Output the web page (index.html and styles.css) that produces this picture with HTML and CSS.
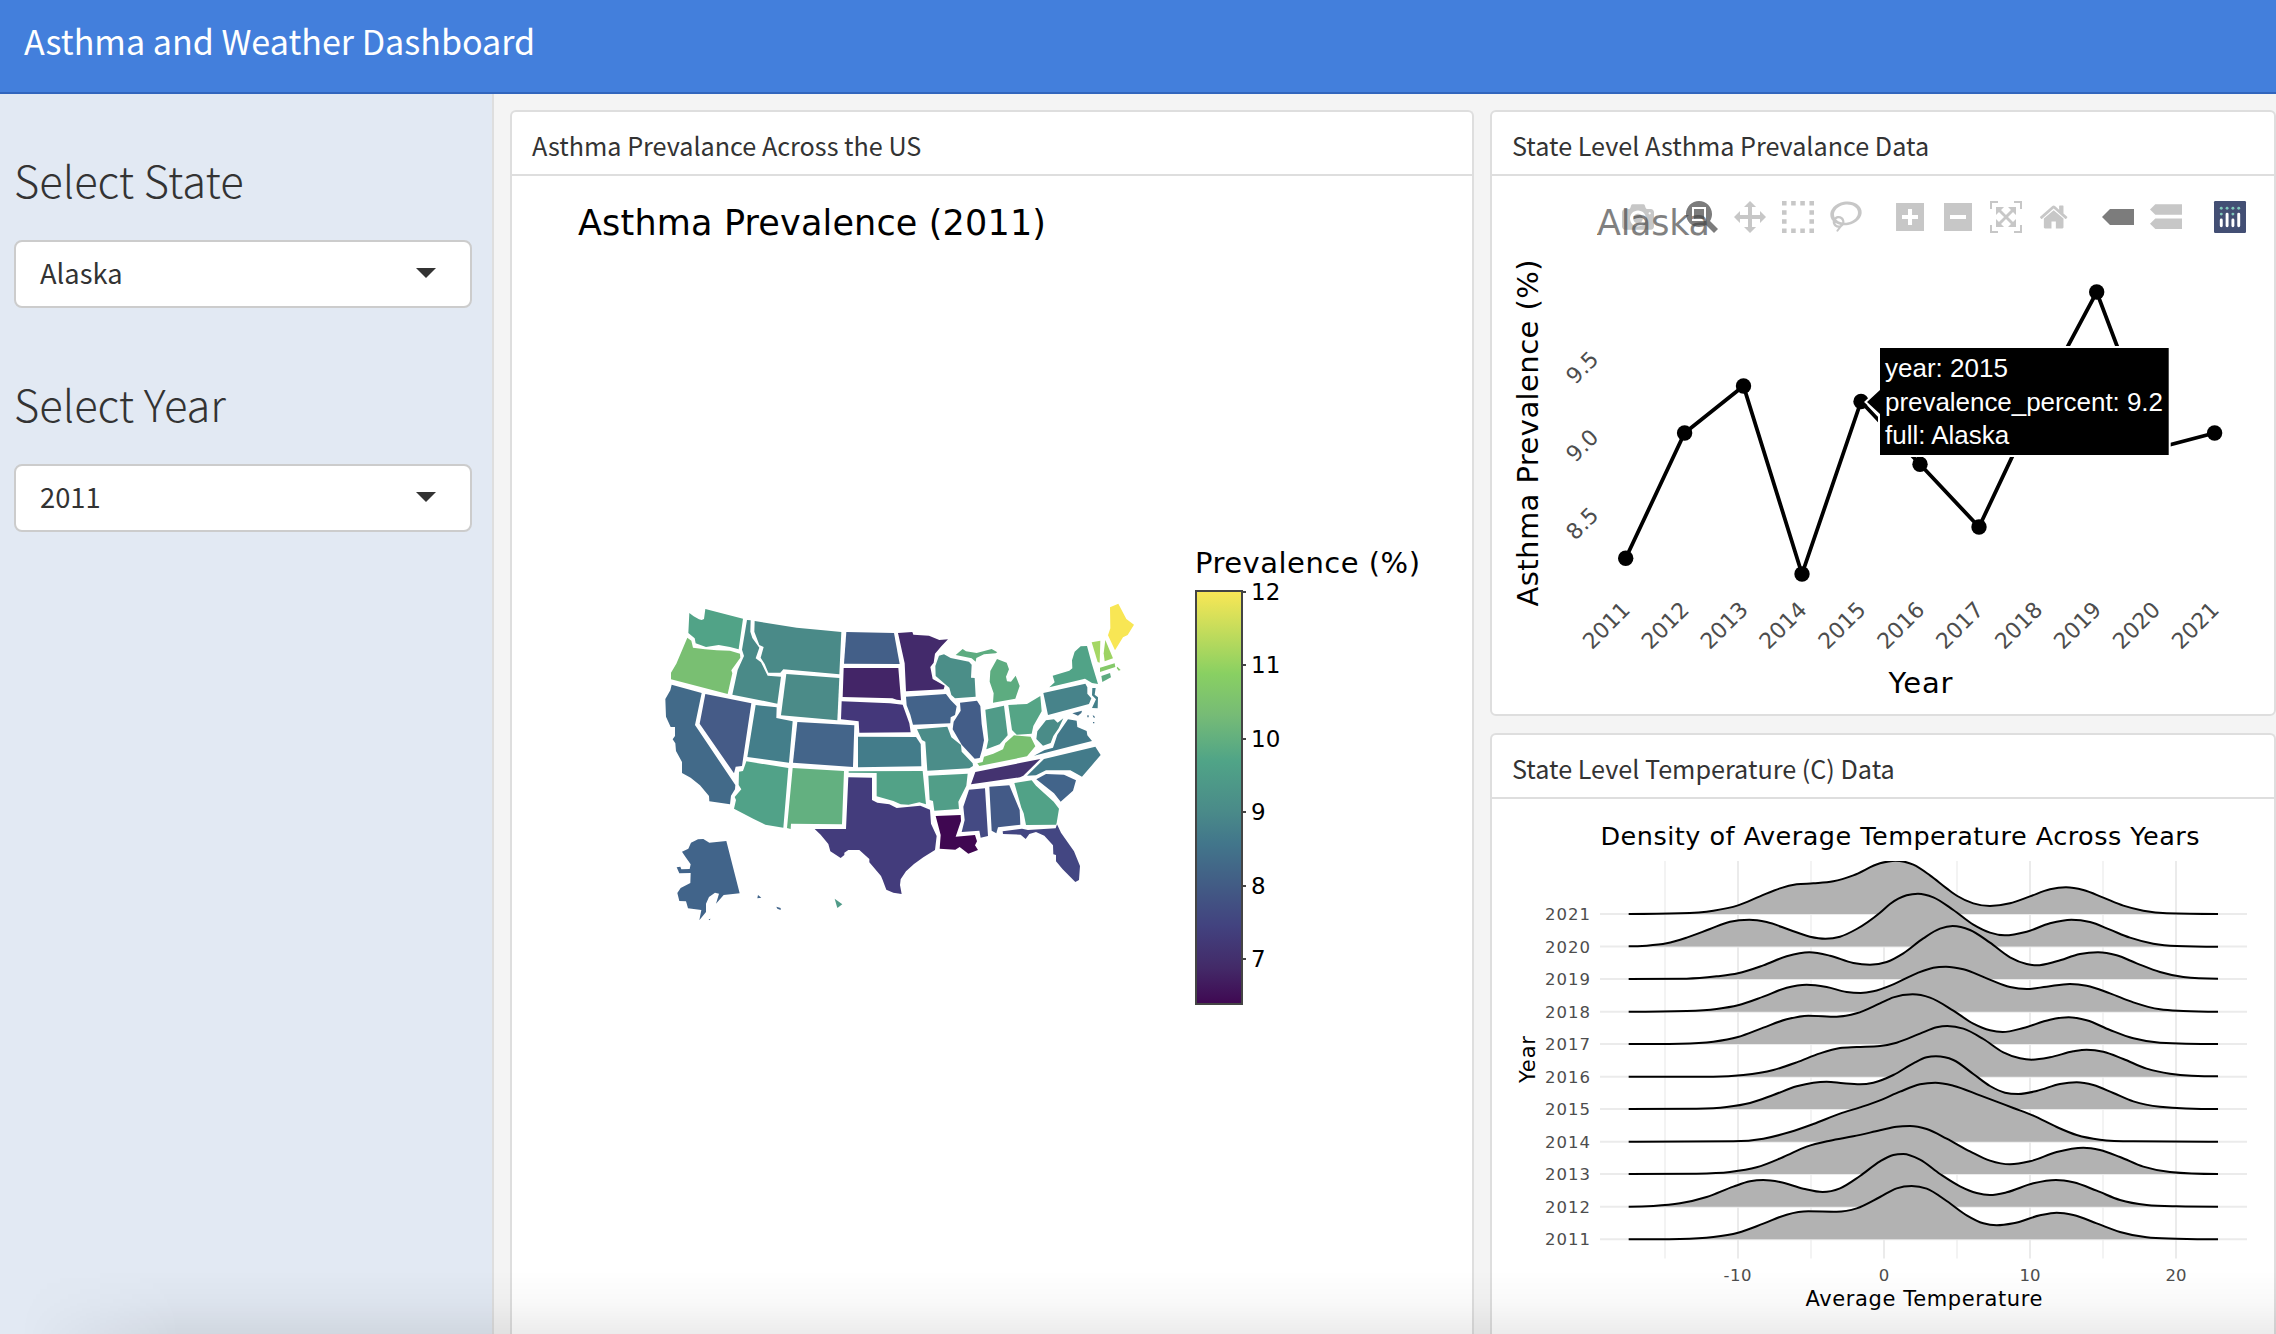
FILE: index.html
```html
<!DOCTYPE html>
<html lang="en">
<head>
<meta charset="utf-8">
<title>Asthma and Weather Dashboard</title>
<link rel="stylesheet" href="styles.css">
</head>
<body>
<header class="navbar"><span class="brand">Asthma and Weather Dashboard</span></header>
<div class="layout">
  <aside class="sidebar">
    <h3 class="side-title">Select State</h3>
    <div class="select"><span>Alaska</span><i class="caret"></i></div>
    <h3 class="side-title">Select Year</h3>
    <div class="select"><span>2011</span><i class="caret"></i></div>
  </aside>
  <main class="board">
    <section class="card">
      <h2 class="card-title">Asthma Prevalance Across the US</h2>
      <svg class="chart" width="960" height="1158" viewBox="512 176 960 1158">
        <defs>
          <linearGradient id="viridis" x1="0" y1="0" x2="0" y2="1">
            <stop offset="0" stop-color="#fae755"/><stop offset=".2" stop-color="#89d062"/>
            <stop offset=".3" stop-color="#76bb76"/><stop offset=".41" stop-color="#50a487"/>
            <stop offset=".53" stop-color="#4a8b89"/><stop offset=".61" stop-color="#42768b"/>
            <stop offset=".81" stop-color="#42427f"/><stop offset=".91" stop-color="#432a68"/>
            <stop offset="1" stop-color="#3f0751"/>
          </linearGradient>
        </defs>
        <text class="verdana" x="578" y="235" font-size="35" textLength="468">Asthma Prevalence (2011)</text>
        <!-- western states, Alaska and Hawaii -->
        <g transform="translate(650 590) scale(.33333)">
          <path fill="#51a387" d="M118 69L131 79L147 88L155 90L162 87L166 57L279 86L266 178L240 171L206 165L168 171L137 160L134 145L115 129Z"/>
          <path fill="#79bf72" d="M112 143L124 152L129 173L165 178L200 181L240 182L270 191L271 203L244 241L247 250L233 312L63 268L63 248L79 221Z"/>
          <path fill="#426a89" d="M65 284L155 309L135 405L256 585L255 598L243 617L240 643L178 634L177 618L150 586L122 563L96 549V516L78 483L76 460L68 448L75 438V411L62 411L48 380L46 327L61 301Z"/>
          <path fill="#455b87" d="M166 312L304 340L276 528L257 530L252 550L149 401Z"/>
          <path fill="#4a8a88" d="M291 90L302 91L301 125L307 144L328 173L317 205L333 217L353 257L393 260L382 341L247 314L263 240L282 198L276 179Z"/>
          <path fill="#4a8a88" d="M314 93L440 113L520 121L574 126L568 253L400 238L391 248L355 248L344 222L332 203L341 171L328 165L313 125Z"/>
          <path fill="#4b8b88" d="M409 252L568 264L562 391L393 376Z"/>
          <path fill="#447e8a" d="M317 345L380 352L379 384L428 394L417 518L292 501Z"/>
          <path fill="#44658a" d="M442 396L613 406L609 531L429 518Z"/>
          <path fill="#51a288" d="M289 514L415 534L400 713L346 704L311 687L252 656L258 630L254 621L274 598L266 585L267 545L279 543Z"/>
          <path fill="#63b080" d="M428 534L582 543L576 703L423 701L422 717L411 714Z"/>
          <path fill="#41648a" d="M144 748L160 747L178 758L229 753L269 910L221 915L198 941L207 911L195 908L177 921L168 941V966L148 991L154 960L114 955L108 934L88 933L82 909L92 894L121 879L122 849L88 850L80 832L91 830L94 838L119 837L122 823L105 799L96 785L115 776L123 758Z"/>
          <path fill="#41648a" d="M324 915L334 923L322 925ZM379 950L392 954V960L382 956ZM176 988L182 986L178 991Z"/>
          <path fill="#509b88" d="M554 926L577 943L562 954Z"/>
        </g>
        <!-- central and eastern states -->
        <g transform="translate(880 590) scale(.33333)">
          <path fill="#435f88" d="M-101 126L42 129L59 222L-108 221Z"/>
          <path fill="#432567" d="M-109 234L55 234L63 331L50 329L37 325L-112 321Z"/>
          <path fill="#44377a" d="M-115 334L30 340L68 344L88 400L92 427L-62 428L-64 394L-117 388Z"/>
          <path fill="#437c8a" d="M-66 440L108 441L122 462L124 529L-66 532Z"/>
          <path fill="#52a287" d="M-94 544L128 543L138 643L118 637L86 644L62 643L40 633L-10 619L-10 549L-94 548Z"/>
          <path fill="#433c7c" d="M-95 562L-24 563V630L-8 638L28 643L50 654L121 647L150 659L153 701L170 738L165 780L130 802L102 822L78 844L62 868L60 885L65 912L40 908L19 899L8 870L3 858L-32 817L-32 807L-62 780L-95 780L-107 788L-107 795L-118 804L-149 784L-155 762L-178 734L-196 717L-102 717Z"/>
          <path fill="#432a6b" d="M54 129L97 126L100 134L147 137L178 150L204 148L184 169L165 191L161 218L151 231L158 267L194 287L191 298L78 304L74 220Z"/>
          <path fill="#43638a" d="M78 320L198 312L211 329L230 349L225 375L212 382L211 400L99 404L91 374L80 346Z"/>
          <path fill="#4b8d89" d="M111 418L202 410L214 442L243 465L245 485L278 520L279 528L268 535L142 542L136 455L126 450Z"/>
          <path fill="#519e88" d="M145 557L263 551L259 587L235 635L237 657L163 662L159 633L149 630Z"/>
          <path fill="#3f0751" d="M167 678L242 675L243 693L227 740L285 735L291 754L285 766L294 780L265 791L239 771L226 779L179 776L182 735Z"/>
          <path fill="#4b8e88" d="M177 197L192 193L212 204L267 215L275 224L273 263L284 264L287 320L225 325L214 315L208 293L167 258L166 228Z"/>
          <path fill="#5dac80" d="M227 195L248 177L258 184L290 189L335 177L352 187L347 190L312 193L289 204L287 215L275 205ZM351 207L380 218L387 238L378 260L381 274L393 275L407 257L419 288L406 326L339 338L341 310L329 275L331 243Z"/>
          <path fill="#435d88" d="M240 338L291 332L301 348L305 402L312 451L306 480L299 504L284 506L245 464L218 418L221 395L242 362Z"/>
          <path fill="#509b88" d="M316 359L372 347L383 436L359 463L319 478L325 450Z"/>
          <path fill="#55a586" d="M385 345L441 342L481 318L485 364L460 408L455 431L410 434L396 420Z"/>
          <path fill="#78bf70" d="M292 520L308 516L312 500L340 491L369 478L376 459L402 436L452 440L466 469L441 499L298 528Z"/>
          <path fill="#443370" d="M286 546L481 507L430 557L420 562L273 583Z"/>
          <path fill="#444a83" d="M267 599L315 595L324 738L302 743L298 722L245 726L254 690L250 650Z"/>
          <path fill="#435a87" d="M328 590L388 586L419 660L421 704L354 712L349 730L335 722Z"/>
          <path fill="#51a287" d="M403 579L455 571L468 587L521 635L537 656L530 699L528 704L438 705L431 670L424 653Z"/>
          <path fill="#434682" d="M368 724L426 716L444 720L527 715L531 703L543 728L582 784L600 828L597 870L586 876L548 838L528 814V795L520 793L519 766L493 737L468 726L448 732L437 747L422 734L369 732Z"/>
          <path fill="#42648a" d="M469 568L498 552L552 554L588 571L579 602L542 635L522 610Z"/>
          <path fill="#437b8a" d="M441 557L492 507L646 470L662 495L637 524L606 560L571 541L498 541L468 556Z"/>
          <path fill="#427889" d="M462 497L494 480L519 473L532 434L564 388L590 392L592 411L620 423L622 436L636 453L588 465Z"/>
          <path fill="#4a8c88" d="M498 391L522 388L533 398L550 385L536 415L520 438L512 459L489 467L469 447L472 424Z"/>
          <path fill="#47838a" d="M490 309L616 281L622 292L622 311L634 325L627 342L504 375Z"/>
          <path fill="#437088" d="M577 370L606 362L604 369L594 377ZM622 376l4 0l0 6l-4 0ZM638 376l5 2l2 6l-5 -2ZM639 396l4 0l0 4l-4 0Z"/>
          <path fill="#44808a" d="M637 294L647 294L644 314L654 322L653 355L636 354L648 328L636 316Z"/>
          <path fill="#51a387" d="M508 292L524 277L518 257L568 242L577 235L576 211L584 185L602 169L621 168L635 220L654 282L636 279L615 266Z"/>
          <path fill="#a5d764" d="M635 157L661 152L659 218L653 216Z"/>
          <path fill="#9dd363" d="M676 150L699 205L674 214L671 190Z"/>
          <path fill="#84c96a" d="M660 233L704 220L706 231L660 246ZM712 230L722 240L716 242L710 234Z"/>
          <path fill="#5cab80" d="M664 258L690 249L693 262L667 276Z"/>
          <path fill="#f8e654" d="M690 52L715 41L739 87L762 104L743 135L729 142L705 181L684 136L691 115Z"/>
        </g>
        <text class="verdana" x="1195" y="573" font-size="29" textLength="225">Prevalence (%)</text>
        <rect x="1196" y="591" width="46" height="414" fill="url(#viridis)"/>
        <rect x="1196" y="591" width="46" height="413" fill="none" stroke="#444" stroke-width="2"/>
        <path d="M1242 592h4M1242 665h4M1242 739h4M1242 812h4M1242 886h4M1242 959h4" stroke="#444" stroke-width="2"/>
        <g class="verdana" font-size="23">
          <text x="1251" y="600">12</text><text x="1251" y="673">11</text><text x="1251" y="747">10</text>
          <text x="1251" y="820">9</text><text x="1251" y="894">8</text><text x="1251" y="967">7</text>
        </g>
      </svg>
    </section>
    <div class="column">
      <section class="card card-top">
        <h2 class="card-title">State Level Asthma Prevalance Data</h2>
        <svg class="chart" width="782" height="538" viewBox="1492 176 782 538">
          <text class="verdana" x="1597" y="234.5" font-size="35" textLength="113">Alaska</text>
          <polyline fill="none" stroke="#000" stroke-width="3.8" points="1625.7,558.3 1684.6,433 1743.5,386 1802,574 1861,401.5 1920,464.3 1979,527 2038,402 2096.7,292 2155.7,448.5 2214.6,433"/>
          <g><circle cx="1625.7" cy="558.3" r="7.7"/><circle cx="1684.6" cy="433" r="7.7"/><circle cx="1743.5" cy="386" r="7.7"/><circle cx="1802" cy="574" r="7.7"/><circle cx="1861" cy="401.5" r="7.7"/><circle cx="1920" cy="464.3" r="7.7"/><circle cx="1979" cy="527" r="7.7"/><circle cx="2096.7" cy="292" r="7.7"/><circle cx="2214.6" cy="433" r="7.7"/></g>
          <g class="tick" font-size="22" text-anchor="end">
            <text transform="translate(1600 360.500) rotate(-45)">9.5</text>
            <text transform="translate(1600 438.500) rotate(-45)">9.0</text>
            <text transform="translate(1600 516.500) rotate(-45)">8.5</text>
            <text transform="translate(1631.5 611) rotate(-45)">2011</text>
            <text transform="translate(1690.4 611) rotate(-45)">2012</text>
            <text transform="translate(1749.3 611) rotate(-45)">2013</text>
            <text transform="translate(1808.2 611) rotate(-45)">2014</text>
            <text transform="translate(1867.1 611) rotate(-45)">2015</text>
            <text transform="translate(1926 611) rotate(-45)">2016</text>
            <text transform="translate(1984.9 611) rotate(-45)">2017</text>
            <text transform="translate(2043.8 611) rotate(-45)">2018</text>
            <text transform="translate(2102.7 611) rotate(-45)">2019</text>
            <text transform="translate(2161.6 611) rotate(-45)">2020</text>
            <text transform="translate(2220.5 611) rotate(-45)">2021</text>
          </g>
          <text class="verdana" transform="translate(1537.5 606.5) rotate(-90)" font-size="29" textLength="347">Asthma Prevalence (%)</text>
          <text class="verdana" x="1888.5" y="692.5" font-size="29" textLength="64">Year</text>
          <!-- hover label -->
          <path d="M1867 402L1880 390V348H2168.7V455H1880V414Z" fill="#000" stroke="#fff" stroke-width="4" paint-order="stroke"/>
          <g class="hover" font-size="26">
            <text x="1885" y="377">year: 2015</text>
            <text x="1885" y="411" textLength="278">prevalence_percent: 9.2</text>
            <text x="1885" y="444">full: Alaska</text>
          </g>
          <!-- modebar -->
          <rect x="1598" y="193" width="658" height="48" fill="#fff" fill-opacity=".5"/>
          <g fill="#444" fill-opacity=".3">
            <path transform="translate(1622 201) scale(.032) matrix(1 0 0 -1 0 850)" d="m500 450c-83 0-150-67-150-150 0-83 67-150 150-150 83 0 150 67 150 150 0 83-67 150-150 150z m400 150h-120c-16 0-34 13-39 29l-31 93c-6 15-23 28-40 28h-340c-16 0-34-13-39-28l-31-94c-6-15-23-28-40-28h-120c-55 0-100-45-100-100v-450c0-55 45-100 100-100h800c55 0 100 45 100 100v450c0 55-45 100-100 100z m-400-550c-138 0-250 112-250 250 0 138 112 250 250 250 138 0 250-112 250-250 0-138-112-250-250-250z m365 380c-19 0-35 16-35 35 0 19 16 35 35 35 19 0 35-16 35-35 0-19-16-35-35-35z"/>
            <path fill-opacity=".7" transform="translate(1686 201) scale(.032) matrix(1 0 0 -1 0 850)" d="m1000-25l-250 251c40 63 63 138 63 218 0 224-182 406-407 406-224 0-406-182-406-406s183-406 407-406c80 0 155 22 218 62l250-250 125 125z m-812 250l0 438 437 0 0-438-437 0z m62 375l313 0 0-312-313 0 0 312z"/>
            <path transform="translate(1734 201) scale(.032) matrix(1 0 0 -1 0 850)" d="m1000 350l-187 188 0-125-250 0 0 250 125 0-188 187-187-187 125 0 0-250-250 0 0 125-188-188 186-187 0 125 252 0 0-250-125 0 187-188 188 188-125 0 0 250 250 0 0-126 187 188z"/>
            <path transform="translate(1782 201) scale(4.571)" d="M0 0h1v1H0zM2 0h1v1H2zM4 0h1v1H4zM6 0h1v1H6zM0 2h1v1H0zM6 2h1v1H6zM0 4h1v1H0zM6 4h1v1H6zM0 6h1v1H0zM2 6h1v1H2zM4 6h1v1H4zM6 6h1v1H6z"/>
            <path transform="translate(1830 201) scale(.031) matrix(1 0 0 -1 0 850)" d="m1018 538c-36 207-290 336-568 286-277-48-473-256-436-463 10-57 36-108 76-151-13-66 11-137 68-183 34-28 75-41 114-42l-55-70 0 0c-2-1-3-2-4-3-10-14-8-34 5-45 14-11 34-8 45 4 1 1 2 3 2 5l0 0 113 140c16 11 31 24 45 40 4 3 6 7 8 11 48-3 100 0 151 9 278 48 473 255 436 462z m-624-379c-80 14-149 48-197 96 42 42 109 47 156 9 33-26 47-66 41-105z m-187-74c-19 16-33 37-39 60 50-32 109-55 174-68-42-25-95-24-135 8z m360 75c-34-7-69-9-102-8 8 62-16 128-68 170-73 59-175 54-244-5-9 20-16 40-20 61-28 159 121 317 333 354s407-60 434-217c28-159-121-318-333-355z"/>
            <path transform="translate(1896 201) scale(.032) matrix(1 0 0 -1 0 850)" d="m1 787l0-875 875 0 0 875-875 0z m687-500l-187 0 0-187-125 0 0 187-188 0 0 125 188 0 0 187 125 0 0-187 187 0 0-125z"/>
            <path transform="translate(1944 201) scale(.032) matrix(1 0 0 -1 0 850)" d="m0 788l0-876 876 0 0 876-876 0z m688-500l-500 0 0 125 500 0 0-125z"/>
            <path transform="translate(1990 201) scale(.032) matrix(1 0 0 -1 0 850)" d="m250 850l-187 0-63 0 0-62 0-188 63 0 0 188 187 0 0 62z m688 0l-188 0 0-62 188 0 0-188 62 0 0 188 0 62-62 0z m-875-938l0 188-63 0 0-188 0-62 63 0 187 0 0 62-187 0z m875 188l0-188-188 0 0-62 188 0 62 0 0 62 0 188-62 0z m-125 188l-1 0-93-94-156 156 156 156 92-93 2 0 0 250-250 0 0-2 93-92-156-156-156 156 94 92 0 2-250 0 0-250 0 0 93 93 157-156-157-156-93 94 0 0 0-250 250 0 0 0-94 93 156 157 156-157-93-93 0 0 250 0 0 250z"/>
            <path transform="translate(2039.500 201) scale(.0305 .032) matrix(1 0 0 -1 0 850)" d="m786 296v-267q0-15-11-26t-25-10h-214v214h-143v-214h-214q-15 0-25 10t-11 26v267q0 1 0 2t0 2l321 264 321-264q1-1 1-4z m124 39l-34-41q-5-5-12-6h-2q-7 0-12 3l-386 322-386-322q-7-4-13-4-7 2-12 7l-35 41q-4 5-3 13t6 12l401 334q18 15 42 15t43-15l136-114v109q0 8 5 13t13 5h107q8 0 13-5t5-13v-227l122-102q5-5 6-12t-4-13z"/>
            <path fill-opacity=".7" transform="translate(2102 209) scale(.02133)" d="M375 0L0 375L375 750H1500V0Z"/>
            <path transform="translate(2150 201) scale(.02844) matrix(1 0 0 -1 0 900)" d="m187 786l0 2-187-188 188-187 0 0 937 0 0 373-938 0z m0-499l0 1-187-188 188-188 0 0 937 0 0 376-938-1z"/>
          </g>
          <g transform="translate(2214 201) scale(.24242)">
            <rect width="132" height="132" rx="5" fill="#434f74"/>
            <g fill="#80c9bb"><circle cx="30" cy="30" r="6"/><circle cx="54" cy="30" r="6"/><circle cx="78" cy="30" r="6"/><circle cx="102" cy="30" r="6"/><circle cx="30" cy="54" r="6"/><circle cx="78" cy="54" r="6"/></g>
            <path d="M30 78V102M54 54V102M78 78V102M102 54V102" stroke="#fff" stroke-width="12" stroke-linecap="round"/>
          </g>
        </svg>
      </section>
      <section class="card card-bottom">
        <h2 class="card-title">State Level Temperature (C) Data</h2>
        <svg class="chart" width="782" height="535" viewBox="1492 799 782 535">
          <text class="plot" x="1600.500" y="845" font-size="25.500" textLength="599">Density of Average Temperature Across Years</text>
          <path d="M1665 861V1258.500M1811 861V1258.500M1957 861V1258.500M2103 861V1258.500" stroke="#f0f0f0" stroke-width="1.500"/>
          <path d="M1738 861V1258.500M1884 861V1258.500M2030 861V1258.500M2176 861V1258.500" stroke="#ebebeb" stroke-width="2"/>
          <clipPath id="panel"><rect x="1600" y="861" width="647" height="398"/></clipPath>
          <g clip-path="url(#panel)"><g id="ridges"></g></g>
          <g class="tick" id="ridge-labels" font-size="16.500"></g>
          <g class="tick" font-size="16.500" text-anchor="middle">
            <text x="1737.500" y="1281" textLength="28">-10</text><text x="1884" y="1281">0</text><text x="2030" y="1281" textLength="21">10</text><text x="2176" y="1281" textLength="21">20</text>
          </g>
          <text class="plot" x="1805.500" y="1306" font-size="21" textLength="237">Average Temperature</text>
          <text class="plot" transform="translate(1535 1083) rotate(-90)" font-size="21" textLength="47">Year</text>
        </svg>
      </section>
    </div>
  </main>
</div>
<div class="fade"></div>
<script src="ridges.js"></script>
</body>
</html>
```
FILE: styles.css
```css
* { box-sizing: border-box; }
html, body { margin: 0; height: 1334px; overflow: hidden; }
body {
  display: flex;
  flex-direction: column;
  background: #f4f4f4;
  color: #333;
  font-family: "Noto Sans CJK SC", "Noto Sans", sans-serif;
}
.navbar {
  flex: none;
  height: 94px;
  padding: 0 0 12px 24px;
  display: flex;
  align-items: center;
  background: #437fdc;
  border-bottom: 2px solid #3165bd;
}
.brand { color: #fff; font-size: 34.1px; line-height: 1; white-space: nowrap; }
.layout { flex: 1; min-height: 0; display: flex; }
.sidebar {
  flex: none;
  width: 494px;
  padding: 56px 20px 0 14px;
  background: #e2e9f3;
  border-right: 2px solid #dedede;
}
.side-title {
  margin: 0;
  height: 90px;
  font-family: "Noto Sans CJK SC Light", "Noto Sans CJK SC", sans-serif;
  font-size: 43.5px;
  line-height: 60px;
  font-weight: 300;
}
.select {
  height: 68px;
  margin-bottom: 66px;
  padding: 0 34px 2px 24px;
  display: flex;
  align-items: center;
  justify-content: space-between;
  background: #fff;
  border: 2px solid #ccc;
  border-radius: 8px;
  font-size: 27.3px;
  line-height: 1;
}
.caret {
  border: 10px solid transparent;
  border-top-color: #333;
  border-bottom: 0;
  margin-bottom: 1px;
}
.board { flex: 1; display: flex; gap: 16px; padding: 16px 0 0 16px; min-width: 0; }
.card {
  width: 964px;
  flex: none;
  background: #fff;
  border: 2px solid #dedede;
  border-bottom: 0;
  border-radius: 6px 6px 0 0;
}
.column { width: 786px; flex: none; display: flex; flex-direction: column; gap: 17px; }
.column .card { width: 786px; }
.card-top { height: 606px; border-bottom: 2px solid #dedede; border-radius: 6px; overflow: hidden; }
.card-bottom { height: 602px; }
.card-title {
  margin: 0;
  height: 64px;
  padding: 5px 0 0 20px;
  border-bottom: 2px solid #dedede;
  font-size: 25.2px;
  line-height: 56px;
  font-weight: 400;
  white-space: nowrap;
}
.chart { display: block; }
.verdana, .tick, .plot { font-family: "DejaVu Sans", Verdana, sans-serif; }
.tick { fill: #4d4d4d; }
.hover { font-family: "Liberation Sans", Arial, sans-serif; fill: #fff; }
.fade {
  position: absolute;
  left: 0;
  right: 0;
  bottom: 0;
  height: 64px;
  background: linear-gradient(rgba(0, 0, 0, 0), rgba(0, 0, 0, .025) 50%, rgba(0, 0, 0, .075));
  -webkit-mask-image: linear-gradient(to right, transparent 20px, #000 180px);
  mask-image: linear-gradient(to right, transparent 20px, #000 180px);
}
```
FILE: ridges.js
```js
// Density outlines per year, top ridge first; three units per pixel.
const ridges = {
  2021: [282, [446,282,600,280,700,272,774,256,840,229,900,205,950,193,1000,190,1060,184,1120,166,1200,130,1246,122,1300,134,1350,166,1400,205,1432,228,1480,250,1530,258,1590,250,1650,229,1710,208,1758,202,1810,210,1870,233,1930,257,1990,272,2060,280,2214,282]],
  2020: [379.5, [446,379,500,377,560,370,620,353,690,327,750,305,808,299,860,306,930,330,990,350,1036,356,1080,350,1130,327,1200,278,1230,252,1280,226,1314,221,1360,232,1420,270,1480,314,1530,338,1574,346,1640,335,1710,310,1774,299,1830,306,1890,329,1950,353,2020,371,2090,378,2214,380]],
  2019: [477, [446,477,620,476,710,469,774,460,850,436,920,409,988,397,1050,407,1120,429,1170,434,1220,426,1270,400,1330,355,1380,326,1418,318,1470,330,1530,368,1590,412,1640,432,1670,436,1730,424,1800,402,1854,397,1910,406,1970,430,2040,456,2110,471,2214,476]],
  2018: [575, [446,575,620,573,710,567,774,556,850,530,920,503,980,494,1040,501,1100,516,1142,519,1180,514,1240,493,1310,460,1360,443,1398,440,1450,448,1520,475,1590,501,1640,507,1700,500,1770,492,1820,497,1890,520,1960,547,2040,568,2110,573,2214,575]],
  2017: [672, [446,672,600,671,700,665,774,651,850,623,920,598,985,587,1070,590,1130,580,1200,550,1240,532,1298,523,1350,533,1420,572,1480,611,1530,631,1568,636,1630,624,1710,599,1766,592,1820,601,1890,630,1960,655,2040,668,2214,672]],
  2016: [770, [446,770,700,770,790,765,880,750,950,727,1020,700,1080,684,1130,681,1200,678,1250,668,1320,641,1370,622,1402,618,1450,626,1510,657,1570,697,1620,715,1655,719,1710,712,1780,694,1820,689,1870,695,1930,717,2000,746,2070,761,2214,769]],
  2015: [867, [446,867,650,866,740,861,810,849,880,825,950,799,1000,788,1040,785,1090,790,1140,793,1180,788,1240,765,1300,730,1340,712,1368,709,1420,720,1480,762,1530,798,1575,818,1615,822,1670,813,1740,792,1790,787,1840,795,1900,819,1960,844,2040,860,2214,867]],
  2014: [965, [446,965,760,964,850,956,930,936,1000,912,1080,881,1140,862,1200,841,1260,815,1320,793,1366,788,1420,797,1500,826,1600,864,1660,887,1730,921,1790,945,1860,959,1960,964,2214,965]],
  2013: [1062, [446,1062,650,1061,750,1056,830,1042,910,1011,980,980,1050,962,1120,949,1200,931,1250,920,1290,918,1340,927,1400,956,1470,994,1530,1022,1590,1033,1650,1024,1730,996,1810,983,1860,990,1920,1011,1990,1040,2070,1056,2214,1062]],
  2012: [1160, [446,1160,520,1158,600,1150,680,1131,760,1100,810,1084,850,1080,900,1086,970,1106,1028,1116,1080,1105,1140,1068,1200,1024,1240,1005,1270,1002,1320,1019,1380,1062,1440,1099,1490,1119,1530,1125,1580,1117,1660,1090,1728,1080,1780,1087,1850,1112,1920,1140,2000,1155,2090,1159,2214,1160]],
  2011: [1257.5, [446,1258,600,1257,700,1251,774,1238,850,1211,920,1184,985,1174,1070,1175,1130,1165,1200,1131,1250,1105,1295,1098,1340,1106,1400,1143,1460,1186,1510,1210,1550,1216,1600,1210,1680,1186,1730,1178,1780,1185,1850,1210,1920,1236,2000,1252,2090,1256,2214,1258]]
};
const NS = "http://www.w3.org/2000/svg";
function add(parent, name, attrs) {
  const el = document.createElementNS(NS, name);
  for (const k in attrs) el.setAttribute(k, attrs[k]);
  parent.appendChild(el);
  return el;
}
// Smooth curve through the samples, flat at the peaks and valleys.
function curve(c) {
  const n = c.length / 2, x = i => c[2 * i], y = i => c[2 * i + 1];
  const slope = i => (y(i + 1) - y(i)) / (x(i + 1) - x(i));
  const m = [];
  for (let i = 0; i < n; i++) {
    if (i === 0 || i === n - 1) { m.push(0); continue; }
    const a = slope(i - 1), b = slope(i);
    const h0 = x(i) - x(i - 1), h1 = x(i + 1) - x(i);
    const p = (a * h1 + b * h0) / (h0 + h1);
    m.push(a * b <= 0 ? 0 : Math.sign(a) * Math.min(Math.abs(p), 2.5 * Math.abs(a), 2.5 * Math.abs(b)));
  }
  let d = `M${x(0)} ${y(0)}`;
  for (let i = 1; i < n; i++) {
    const h = (x(i) - x(i - 1)) / 3;
    d += `C${x(i - 1) + h} ${y(i - 1) + m[i - 1] * h} ${x(i) - h} ${y(i) - m[i] * h} ${x(i)} ${y(i)}`;
  }
  return d;
}
const layer = document.getElementById("ridges");
layer.setAttribute("transform", "translate(1480 820) scale(.33333)");
const labels = document.getElementById("ridge-labels");
const years = Object.keys(ridges).reverse();
for (const yr of years) {
  const b = ridges[yr][0];
  add(layer, "path", { d: `M360 ${b}H2301`, stroke: "#ebebeb", "stroke-width": 6 });
}
for (const yr of years) {
  const [b, pts] = ridges[yr], d = curve(pts);
  add(layer, "path", { d: `${d}V${b}H446Z`, fill: "#b2b2b2" });
  add(layer, "path", { d, fill: "none", stroke: "#000", "stroke-width": 6 });
  add(labels, "text", { x: 1545, y: 820 + b / 3 + 6, textLength: 45 }).textContent = yr;
}
```
